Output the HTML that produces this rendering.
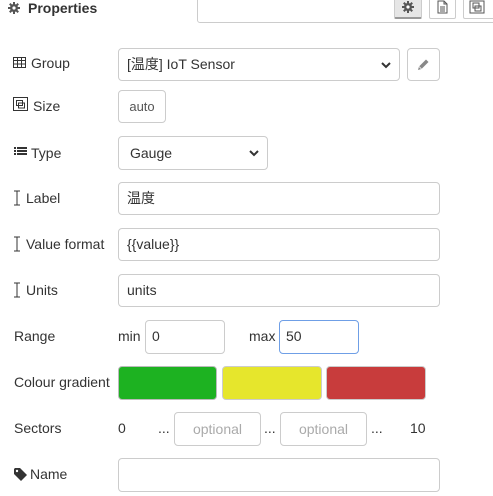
<!DOCTYPE html>
<html><head><meta charset="utf-8"><style>
body{margin:0;width:493px;height:496px;overflow:hidden;background:#fff;font-family:"Liberation Sans","Noto Sans CJK JP",sans-serif;font-size:14px;color:#333;position:relative}
.a{position:absolute}
.box{position:absolute;border:1px solid #ccc;border-radius:4px;box-sizing:border-box;background:#fff}
.t{position:absolute;line-height:16px}
.in{padding-left:8px;line-height:31px}
.chev{position:absolute;right:8px;top:12px}
</style></head><body>
<svg width="0" height="0" style="position:absolute"><defs><g id="gear"><g fill="#555"><circle cx="6" cy="6" r="4"/><rect x="5" y="0" width="2" height="12"/><rect x="0" y="5" width="12" height="2"/><rect x="5" y="0" width="2" height="12" transform="rotate(45 6 6)"/><rect x="5" y="0" width="2" height="12" transform="rotate(-45 6 6)"/></g><circle cx="6" cy="6" r="1.6" fill="#fff"/></g></defs></svg>
<svg class="a" style="left:8px;top:2px" width="12" height="12" viewBox="0 0 12 12"><use href="#gear"/></svg>
<div class="t" style="left:28px;top:0px;font-weight:bold">Properties</div>
<div class="box" style="left:197px;top:-6px;width:310px;height:29px;border-radius:3px"></div>
<div class="box" style="left:394px;top:-4px;width:28px;height:23px;background:#e6e6e6;border-bottom:2px solid #999;border-radius:2px"></div>
<svg class="a" style="left:402px;top:1px" width="12" height="12" viewBox="0 0 12 12"><use href="#gear"/></svg>
<div class="box" style="left:429px;top:-4px;width:27px;height:23px;border-radius:2px"></div>
<svg class="a" style="left:437px;top:0" width="11" height="14" viewBox="0 0 11 14"><path d="M1 1h6l3 3v9H1z M7 1v3h3 M3 7h5M3 9h5M3 11h5" fill="none" stroke="#555"/></svg>
<div class="box" style="left:463px;top:-4px;width:32px;height:23px;border-radius:2px"></div>
<svg class="a" style="left:469px;top:0" width="16" height="14" viewBox="0 0 16 14"><rect x="1" y="1" width="14" height="12" fill="none" stroke="#555"/><rect x="4" y="3" width="6" height="5" fill="none" stroke="#555"/><rect x="6" y="6" width="6" height="5" fill="none" stroke="#555"/></svg>

<svg class="a" style="left:13px;top:57px" width="13" height="11" viewBox="0 0 13 11"><path d="M.5 .5h12v10H.5z M.5 3.5h12M.5 7h12M4.5 .5v10M8.5 .5v10" fill="none" stroke="#333"/></svg>
<div class="t" style="left:31px;top:55px">Group</div>
<div class="box in" style="left:118px;top:48px;width:282px;height:33px">[温度] IoT Sensor<svg class="chev" width="10" height="8" viewBox="0 0 10 8"><path d="M1 2l4 4 4-4" fill="none" stroke="#333" stroke-width="2"/></svg></div>
<div class="box" style="left:407px;top:48px;width:33px;height:33px"></div>
<svg class="a" style="left:417px;top:58px" width="13" height="13" viewBox="0 0 13 13"><path d="M1 12l1-3.5 7-7 2.5 2.5-7 7z" fill="#888"/><path d="M2 8.5l2.5 2.5" stroke="#fff" stroke-width=".8"/></svg>

<svg class="a" style="left:12px;top:96px" width="17" height="16" viewBox="0 0 17 16"><rect x="1.5" y="1.5" width="14" height="13" fill="none" stroke="#333"/><rect x="4.5" y="4.5" width="6" height="5" fill="none" stroke="#333"/><rect x="6.5" y="7" width="6" height="5" fill="none" stroke="#333"/></svg>
<div class="t" style="left:33px;top:98px">Size</div>
<div class="box" style="left:118px;top:90px;width:48px;height:33px;color:#555;font-size:13px;line-height:31px;text-align:center">auto</div>

<svg class="a" style="left:14px;top:147px" width="13" height="10" viewBox="0 0 13 10"><path d="M0 1h2M3 1h10M0 4h2M3 4h10M0 7h2M3 7h10" stroke="#333" stroke-width="2"/></svg>
<div class="t" style="left:31px;top:145px">Type</div>
<div class="box in" style="left:118px;top:136px;width:150px;height:34px;line-height:32px;padding-left:11px">Gauge<svg class="chev" width="10" height="8" viewBox="0 0 10 8"><path d="M1 2l4 4 4-4" fill="none" stroke="#333" stroke-width="2"/></svg></div>

<svg class="a" style="left:13px;top:190px" width="8" height="16" viewBox="0 0 8 16"><path d="M1 1h6M1 15h6M4 1v14" stroke="#333"/></svg>
<div class="t" style="left:26px;top:190px">Label</div>
<div class="box in" style="left:118px;top:182px;width:322px;height:33px">温度</div>

<svg class="a" style="left:13px;top:236px" width="8" height="16" viewBox="0 0 8 16"><path d="M1 1h6M1 15h6M4 1v14" stroke="#333"/></svg>
<div class="t" style="left:26px;top:236px">Value format</div>
<div class="box in" style="left:118px;top:228px;width:322px;height:33px">{{value}}</div>

<svg class="a" style="left:13px;top:282px" width="8" height="16" viewBox="0 0 8 16"><path d="M1 1h6M1 15h6M4 1v14" stroke="#333"/></svg>
<div class="t" style="left:26px;top:282px">Units</div>
<div class="box in" style="left:118px;top:274px;width:322px;height:33px">units</div>

<div class="t" style="left:14px;top:328px">Range</div>
<div class="t" style="left:118px;top:328px">min</div>
<div class="box in" style="left:145px;top:320px;width:80px;height:34px;padding-left:6px">0</div>
<div class="t" style="left:249px;top:328px">max</div>
<div class="box in" style="left:279px;top:320px;width:80px;height:34px;padding-left:6px;border-color:#6f9fe6">50</div>

<div class="t" style="left:14px;top:374px">Colour gradient</div>
<div class="box" style="left:118px;top:366px;width:99px;height:34px;background:#1db221;border-color:#bbb"></div>
<div class="box" style="left:222px;top:366px;width:100px;height:34px;background:#e6e62c;border-color:#ccc"></div>
<div class="box" style="left:326px;top:366px;width:100px;height:34px;background:#c83c3c;border-color:#ccc"></div>

<div class="t" style="left:14px;top:420px">Sectors</div>
<div class="t" style="left:118px;top:420px">0</div>
<div class="t" style="left:158px;top:420px">...</div>
<div class="box" style="left:174px;top:412px;width:87px;height:34px;color:#aaa;line-height:32px;text-align:center">optional</div>
<div class="t" style="left:264px;top:420px">...</div>
<div class="box" style="left:280px;top:412px;width:87px;height:34px;color:#aaa;line-height:32px;text-align:center">optional</div>
<div class="t" style="left:371px;top:420px">...</div>
<div class="t" style="left:410px;top:420px">10</div>

<svg class="a" style="left:14px;top:468px" width="13" height="13" viewBox="0 0 13 13"><path d="M0 1v5l7 7 6-6-7-7H1z" fill="#333"/><circle cx="3" cy="3" r="1.2" fill="#fff"/></svg>
<div class="t" style="left:30px;top:466px">Name</div>
<div class="box" style="left:118px;top:458px;width:322px;height:34px"></div>
</body></html>
